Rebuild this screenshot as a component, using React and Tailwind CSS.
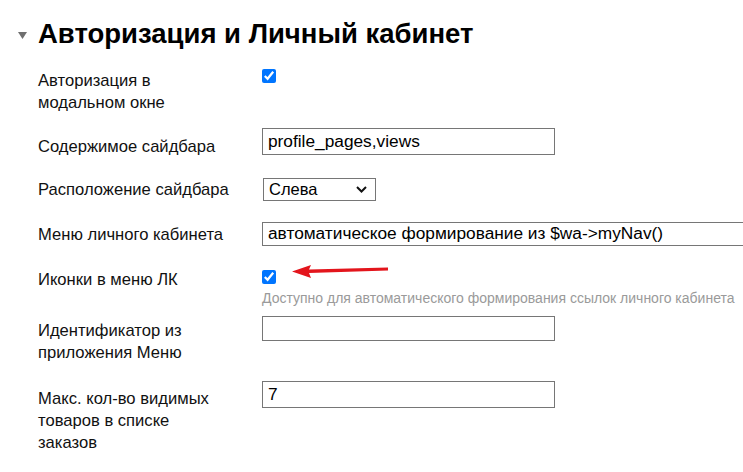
import React from 'react'

function Checkbox({ className = '' }) {
  return (
    <input
      type="checkbox"
      defaultChecked
      className={`m-0 h-[14px] w-[14px] accent-[#0075ff] ${className}`}
    />
  )
}

function TextInput({ value, className = '' }) {
  return (
    <div
      className={`flex items-center border border-[#767676] pl-[5px] text-[17.3px] text-black whitespace-nowrap overflow-hidden ${className}`}
    >
      {value}
    </div>
  )
}

function Row({ label, className = '', children }) {
  return (
    <div className={`flex items-start ${className}`}>
      <div className="w-[200px] shrink-0 pt-[2px] text-[16.6px] leading-[22px] text-[#111]">{label}</div>
      <div className="ml-[24px] flex flex-col items-start">{children}</div>
    </div>
  )
}

export default function App() {
  return (
    <div className="relative w-[743px] h-[472px] overflow-hidden bg-white font-['Liberation_Sans',Arial,sans-serif] pt-[18px]">
      {/* section header */}
      <div className="flex items-center h-[32px]">
        <svg width="9" height="7" viewBox="0 0 9 7" className="ml-[18px] mt-[2px]">
          <polygon points="0,0 9,0 4.5,7" fill="#6f6f6f" />
        </svg>
        <h2 className="ml-[11px] text-[27.5px] font-bold leading-[32px] text-black">
          Авторизация и Личный кабинет
        </h2>
      </div>

      <div className="pl-[38px]">
        <Row label={<>Авторизация в<br />модальном окне</>} className="mt-[18px]">
          <Checkbox className="mt-[1px]" />
        </Row>

        <Row label="Содержимое сайдбара" className="mt-[20px]">
          <TextInput value="profile_pages,views" className="mt-[-6px] h-[27px] w-[293px]" />
        </Row>

        <Row label="Расположение сайдбара" className="mt-[19px]">
          <div className="ml-px mt-px flex items-center justify-between h-[23px] w-[113px] border border-[#767676] pl-[5px] pr-[8px] text-[16.5px] text-black">
            <span>Слева</span>
            <svg width="11" height="7" viewBox="0 0 11 7">
              <polyline points="1,1 5.5,5.5 10,1" fill="none" stroke="#111" strokeWidth="2" />
            </svg>
          </div>
        </Row>

        <Row label="Меню личного кабинета" className="mt-[21px]">
          <TextInput
            value="автоматическое формирование из $wa->myNav()"
            className="mt-0 h-[24px] w-[520px]"
          />
        </Row>

        <Row label="Иконки в меню ЛК" className="mt-[21px]">
          <Checkbox className="mt-[3px]" />
          <div className="mt-[4px] text-[14px] leading-[20px] text-[#9a9a9a] whitespace-nowrap">
            Доступно для автоматического формирования ссылок личного кабинета
          </div>
        </Row>

        <Row label={<>Идентификатор из<br />приложения Меню</>} className="mt-[10px]">
          <TextInput value="" className="mt-[-2px] h-[25px] w-[293px]" />
        </Row>

        <Row label={<>Макс. кол-во видимых<br />товаров в списке<br />заказов</>} className="mt-[22px]">
          <TextInput value="7" className="mt-[-5px] h-[27px] w-[293px]" />
        </Row>
      </div>

      {/* red annotation arrow */}
      <svg className="absolute left-0 top-0 pointer-events-none" width="743" height="472">
        <polygon points="292,271.5 311,265 309,269.5 388,267.5 388,270.5 309,273 311,278" fill="#e3151c" />
      </svg>
    </div>
  )
}
